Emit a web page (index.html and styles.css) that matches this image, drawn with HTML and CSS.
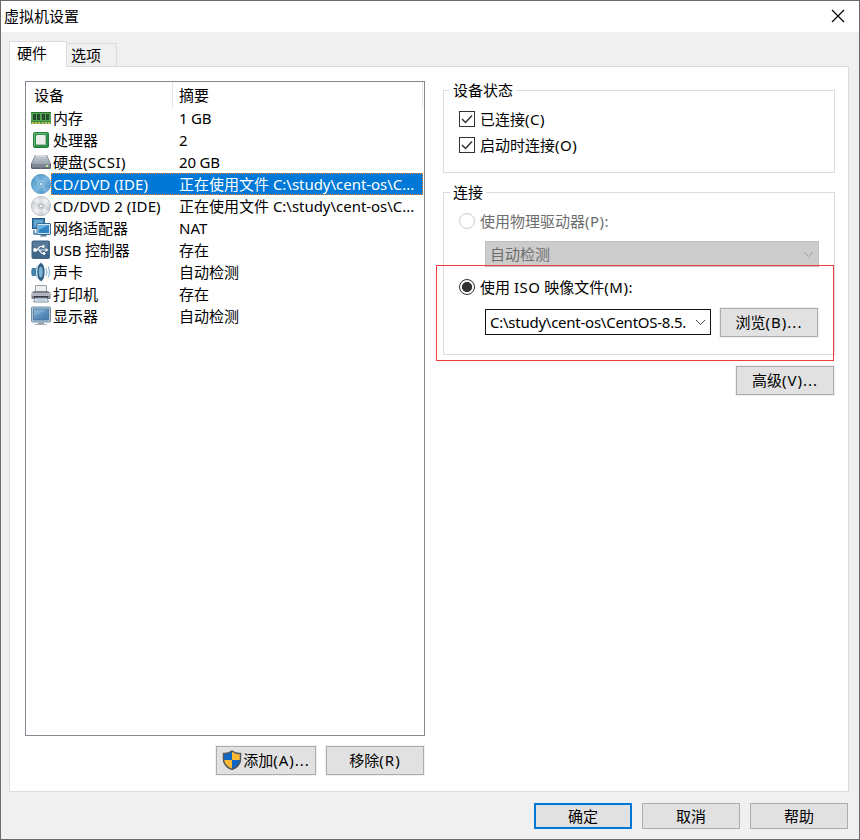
FILE: index.html
```html
<!DOCTYPE html>
<html lang="zh-CN">
<head>
<meta charset="utf-8">
<title>虚拟机设置</title>
<link rel="stylesheet" href="styles.css">
</head>
<body>
<svg class="defs" width="0" height="0" aria-hidden="true">
  <defs>
    <linearGradient id="metal" x2="0" y2="1"><stop offset="0" stop-color="#c8d0d8"/><stop offset="1" stop-color="#98a3b0"/></linearGradient>
    <linearGradient id="blueDisc" x2="1" y2="1"><stop offset="0" stop-color="#3c87bd"/><stop offset=".5" stop-color="#7db9e0"/><stop offset="1" stop-color="#3c86bf"/></linearGradient>
    <linearGradient id="grayDisc" x2="1" y2="1"><stop offset="0" stop-color="#b4b9c1"/><stop offset=".5" stop-color="#f1f2f4"/><stop offset="1" stop-color="#a9aeb8"/></linearGradient>
    <linearGradient id="screen" x2="1" y2="1"><stop offset="0" stop-color="#7ba7cf"/><stop offset="1" stop-color="#4278ad"/></linearGradient>
  </defs>
</svg>
<div class="window">
  <header class="titlebar">
    <span class="title">虚拟机设置</span>
    <svg class="close" width="14" height="14" viewBox="0 0 14 14"><path d="M1 1l12 12M13 1L1 13" stroke="#000" stroke-width="1.2"/></svg>
  </header>
  <nav class="tabs">
    <div class="tab active">硬件</div>
    <div class="tab">选项</div>
  </nav>
  <main class="pane">
    <section class="left">
      <div class="list">
        <div class="row head"><span class="name">设备</span><span class="value">摘要</span></div>
        <div class="row">
          <svg class="icon" viewBox="0 0 20 20"><path d="M0 4h20v12H0z" fill="#55a253"/><path d="M0 4h20v1H0z" fill="#2d7431"/><path d="M2 6h3v6H2zM6 6h3v6H6zM11 6h3v6h-3zM15 6h3v6h-3z" fill="#254c2c"/><path d="M0 13h20v1H0z" fill="#368a3a"/><path d="M1 14h2v2H1zM4 14h2v2H4zM7 14h2v2H7zM11 14h2v2h-2zM14 14h2v2h-2zM17 14h2v2h-2z" fill="#c9b55b"/></svg>
          <span class="name">内存</span><span class="value narrow">1 GB</span></div>
        <div class="row">
          <svg class="icon" viewBox="0 0 20 20"><rect x="2.5" y="2.5" width="15" height="15" rx="1" fill="#2b9148" stroke="#277b3c"/><path d="M3.500 16V3.500H16" fill="none" stroke="#64b878"/><path d="M6 5h8l1 1v8l-1 1H6l-1-1V6z" fill="#eceeeb"/><path d="M6 14.500h8.500V6" fill="none" stroke="#b4bdb5"/></svg>
          <span class="name">处理器</span><span class="value">2</span></div>
        <div class="row">
          <svg class="icon" viewBox="0 0 20 20"><path d="M4 3h12l4 9v4l-1 1H1l-1-1v-4z" fill="#59626c"/><path d="M4.500 3h11L19.500 12H.5z" fill="url(#metal)"/><path d="M1 12h18v3.500H1z" fill="#7e8995"/><path d="M5 4h10" stroke="#e2e6eb"/><path d="M15 13h2v2h-2z" fill="#baf28a"/></svg>
          <span class="name">硬盘<span class="wide">(SCSI)</span></span><span class="value narrow">20 GB</span></div>
        <div class="row selected">
          <svg class="icon" viewBox="0 0 20 20"><circle cx="10" cy="10" r="9.700" fill="url(#blueDisc)" stroke="#4386b7" stroke-width=".6"/><path d="M10 10L2 5a9 9 0 0 1 5-4zM10 10l8 5a9 9 0 0 1-5 4z" fill="#b4daf2" opacity=".3"/><circle cx="10" cy="10" r="3.400" fill="#8cc1e4"/><circle cx="10" cy="10" r="1.600" fill="#eef8fd" stroke="#4a8cba" stroke-width=".7"/></svg>
          <span class="name disc">CD/DVD (IDE)</span><span class="value">正在使用文件 <span class="path">C:\study\cent-os\C...</span></span></div>
        <div class="row">
          <svg class="icon" viewBox="0 0 20 20"><circle cx="10" cy="10" r="9.600" fill="url(#grayDisc)" stroke="#a7abb4" stroke-width=".7"/><path d="M10 10L2 5a9 9 0 0 1 5-4zM10 10l8 5a9 9 0 0 1-5 4z" fill="#fff" opacity=".5"/><circle cx="10" cy="10" r="3.300" fill="#dadde1" stroke="#adb1ba" stroke-width=".6"/><circle cx="10" cy="10" r="1.600" fill="#fff" stroke="#9da1aa" stroke-width=".7"/></svg>
          <span class="name disc">CD/DVD 2 (IDE)</span><span class="value">正在使用文件 <span class="path">C:\study\cent-os\C...</span></span></div>
        <div class="row">
          <svg class="icon" viewBox="0 0 20 20"><path d="M3 12v4h5" fill="none" stroke="#477fa9" stroke-width="1.500"/><rect x="1.500" y=".5" width="12" height="10" fill="#4381b1" stroke="#285b86"/><path d="M3 2h9v7H3z" fill="#61a5d4"/><rect x="6" y="5.500" width="13.500" height="11" rx=".5" fill="#d5e4ee" stroke="#356d99"/><path d="M7.500 7h10.500v8H7.500z" fill="#2d82c2"/><path d="M7.500 7h10.500l-10.500 5z" fill="#69b3e3"/><path d="M10 17h5l1 1.500H9z" fill="#547fa0"/></svg>
          <span class="name">网络适配器</span><span class="value">NAT</span></div>
        <div class="row">
          <svg class="icon" viewBox="0 0 20 20"><rect x=".5" y=".5" width="18.500" height="18.500" rx="2" fill="#426688"/><path d="M2 2h15v7H2z" fill="#58799a"/><path d="M3 10h13M6 10l3-3.500h3M8 10l3 3.500h2" fill="none" stroke="#edf2f7" stroke-width="1.200"/><circle cx="4" cy="10" r="1.900" fill="#fff"/><path d="M14.500 8l3 2-3 2zM11 5.300h2.500v2.500H11z" fill="#fff"/><circle cx="13" cy="13.500" r="1.400" fill="#fff"/></svg>
          <span class="name narrow">USB 控制器</span><span class="value">存在</span></div>
        <div class="row">
          <svg class="icon" viewBox="0 0 20 20"><path d="M1 6h4l5-5.500c4 3 4 16 0 19l-5-5.500H1q-1.500-4 0-8z" fill="#467fa9"/><path d="M5 6.500L10 1v18l-5-5.500z" fill="#bdd5e5"/><ellipse cx="10" cy="10" rx="3.600" ry="8.800" fill="#315f83"/><ellipse cx="9.800" cy="10" rx="2" ry="5.500" fill="#7db3d6"/><path d="M14.800 6.500q2 3.500 0 7M17 4.500q3 5.500 0 11" fill="none" stroke="#83b3d4" stroke-width="1.100"/></svg>
          <span class="name">声卡</span><span class="value">自动检测</span></div>
        <div class="row">
          <svg class="icon" viewBox="0 0 20 20"><path d="M4.500 1.500h11V9h-11z" fill="#eceeef" stroke="#9ba0a7"/><path d="M3 7h14l2.500 2v6H.5V9z" fill="#7b818a"/><path d="M1 9h18v3H1z" fill="#b2b7bd"/><path d="M3 12h14v2H3z" fill="#363d47"/><path d="M4 14h12l1.500 4h-15z" fill="#e5edf4" stroke="#8390a0"/><path d="M5 16h10" stroke="#9fb7cc"/></svg>
          <span class="name">打印机</span><span class="value">存在</span></div>
        <div class="row">
          <svg class="icon" viewBox="0 0 20 20"><rect x=".5" y="1" width="19" height="15" rx="1" fill="#b3c8d8" stroke="#6f8fa9"/><path d="M2.500 3h15v11h-15z" fill="url(#screen)" stroke="#3d6a94" stroke-width=".7"/><path d="M3 3.500h14L3 10z" fill="#9bc0de" opacity=".45"/><path d="M7 16.500h6V18H7z" fill="#8b9ba8"/><path d="M4 18h12v1H4z" fill="#a7b2bc"/></svg>
          <span class="name">显示器</span><span class="value">自动检测</span></div>
      </div>
      <div class="actions">
        <button class="btn raised add"><svg width="20" height="20" viewBox="0 0 20 20"><path d="M10 1q4 3 8.500 2.500V9q0 7-8.500 10.500Q1.500 16 1.500 9V3.500Q6 4 10 1z" fill="#0f66c4"/><path d="M10 1q4 3 8.500 2.500V10H10zM10 10v9.500Q2.500 16 1.500 10z" fill="#fdb933"/><path d="M10 1q4 3 8.500 2.500V9q0 7-8.500 10.500Q1.500 16 1.500 9V3.500Q6 4 10 1z" fill="none" stroke="#525a5e" stroke-width="1.500"/></svg><span>添加<span class="label">(A)...</span></span></button>
        <button class="btn raised"><span>移除<span class="label">(R)</span></span></button>
      </div>
    </section>
    <section class="right">
      <div class="group status">
        <span class="legend">设备状态</span>
        <div class="option"><span class="check"><svg width="14" height="14" viewBox="0 0 14 14"><path d="M2 7l3.500 3.500L12 3.500" fill="none" stroke="#333" stroke-width="1.500"/></svg></span><span>已连接<span class="wide">(C)</span></span></div>
        <div class="option"><span class="check"><svg width="14" height="14" viewBox="0 0 14 14"><path d="M2 7l3.500 3.500L12 3.500" fill="none" stroke="#333" stroke-width="1.500"/></svg></span><span>启动时连接<span class="wide">(O)</span></span></div>
      </div>
      <div class="group connection">
        <span class="legend">连接</span>
        <div class="option disabled"><span class="radio"></span><span>使用物理驱动器<span class="wide">(P):</span></span></div>
        <div class="combo off"><span class="text">自动检测</span><svg width="11" height="7" viewBox="0 0 11 7"><path d="M1 1l4.500 4.500L10 1" fill="none" stroke="#a0a0a0"/></svg></div>
        <div class="option iso"><span class="radio on"></span><span>使用 <span class="wide">ISO</span> 映像文件<span class="wide">(M):</span></span></div>
        <div class="file">
          <div class="combo"><span class="text path-long">C:\study\cent-os\CentOS-8.5.</span><svg width="11" height="7" viewBox="0 0 11 7"><path d="M1 1l4.500 4.500L10 1" fill="none" stroke="#444"/></svg></div>
          <button class="btn raised"><span>浏览<span class="label">(B)...</span></span></button>
        </div>
        <div class="marker"></div>
      </div>
      <button class="btn raised advanced"><span>高级<span class="label">(V)...</span></span></button>
    </section>
  </main>
  <footer class="footer">
    <button class="btn primary">确定</button>
    <button class="btn">取消</button>
    <button class="btn">帮助</button>
  </footer>
</div>
</body>
</html>
```
FILE: styles.css
```css
* { box-sizing: border-box; }
body { margin: 0; }
.defs { display: block; }
.window {
  width: 860px; height: 840px;
  display: flex; flex-direction: column;
  background: #f0f0f0;
  border: 1px solid #6b6b6d;
  color: #000;
  font: 15px/22px "Noto Sans", "Noto Sans CJK SC", sans-serif;
  white-space: nowrap;
  overflow: hidden;
}
.titlebar {
  height: 31px; flex: none;
  display: flex; align-items: center; justify-content: space-between;
  padding: 0 14px 0 3px;
  background: #fff;
}
.title { padding-bottom: 2px; }
.close { margin-bottom: 1px; }
.tabs { height: 34px; flex: none; display: flex; align-items: flex-end; padding-left: 8px; }
.tab { width: 50px; height: 23px; border: 1px solid #dcdcdc; border-width: 1px 1px 0 0; padding-left: 4px; line-height: 22px; }
.tab.active {
  position: relative; z-index: 1;
  width: 58px; height: 26px; margin-bottom: -1px;
  background: #fff; border-left-width: 1px; padding-left: 7px;
}
.pane {
  width: 840px; height: 726px; flex: none; margin-left: 8px;
  display: flex; align-items: flex-start; gap: 18px;
  padding: 14px 13px 0 15px;
  background: #fff; border: 1px solid #dcdcdc;
}
.left { width: 400px; flex: none; }
.list { height: 655px; border: 1px solid #828790; padding-right: 1px; }
.row { display: grid; grid-template-columns: 20px 127px 1fr; height: 22px; padding-left: 5px; }
.icon { width: 20px; height: 20px; margin-top: 1px; }
.name { padding-left: 2px; }
.value { padding-left: 1px; overflow: hidden; }
.wide { letter-spacing: .5px; }
.label { letter-spacing: 1px; }
.disc { letter-spacing: .08px; }
.narrow { letter-spacing: -.2px; }
.path { letter-spacing: -.03px; }
.path-long { letter-spacing: -.25px; }
.head { grid-template-columns: 141px 1fr; height: 25px; line-height: 26px; padding-left: 6px; }
.head .name { border-right: 1px solid #e5e5e5; }
.head .value { padding-left: 6px; border-right: 1px solid #e5e5e5; }
.selected { background: linear-gradient(#0078d7, #0078d7) 25px 0 no-repeat; color: #fff; position: relative; }
.selected::after { content: ""; position: absolute; inset: 0 0 0 25px; border: 1px dotted #ff8728; }
.actions { display: flex; justify-content: flex-end; gap: 10px; margin: 10px 1px 0 0; }
.btn {
  width: 98px; height: 26px; padding: 0 0 1px;
  display: flex; align-items: center; justify-content: center;
  background: #e1e1e1; border: 1px solid #adadad; border-radius: 0;
  font: inherit; color: inherit;
}
.raised { height: 29px; padding-bottom: 2px; box-shadow: 0 0 0 1px #f0f0f0; }
.add { width: 100px; gap: 1px; }
.primary { border: 2px solid #0078d7; }
.right { width: 392px; padding-top: 9px; display: flex; flex-direction: column; }
.group { position: relative; border: 1px solid #dcdcdc; padding-left: 15px; }
.legend { position: absolute; left: 6px; top: -12px; padding: 0 3px; background: #fff; line-height: 22px; }
.status { height: 83px; padding-top: 17px; }
.option { display: flex; align-items: center; gap: 5px; height: 22px; }
.status .option + .option { margin-top: 4px; }
.check { width: 16px; height: 16px; border: 1px solid #333; background: #fff; }
.check svg { display: block; }
.radio { width: 16px; height: 16px; border: 1px solid #333; border-radius: 50%; }
.radio.on { background: radial-gradient(circle, #333 0 4.7px, #fff 5.4px); }
.disabled { color: #6d6d6d; }
.disabled .radio { border-color: #ccc; }
.connection { height: 163px; margin-top: 19px; padding-top: 17px; }
.combo { display: flex; align-items: center; justify-content: space-between; width: 226px; height: 26px; padding: 0 4px; border: 1px solid #111; background: #fff; }
.combo .text { flex: none; padding-bottom: 1px; }
.combo svg { flex: none; }
.combo.off { width: 334px; margin: 9px 0 0 26px; color: #6d6d6d; background: #ccc; border-color: #bfbfbf; }
.iso { margin-top: 9px; }
.file { display: flex; gap: 9px; margin: 11px 0 0 26px; }
.file .btn { margin-top: -1px; }
.marker { position: absolute; left: -8px; top: 72px; width: 398px; height: 96px; border: 1px solid #f23b3b; }
.advanced { margin: 11px 1px 0 0; align-self: flex-end; }
.footer { display: flex; justify-content: flex-end; gap: 10px; padding: 11px 11px 0 0; }
```
